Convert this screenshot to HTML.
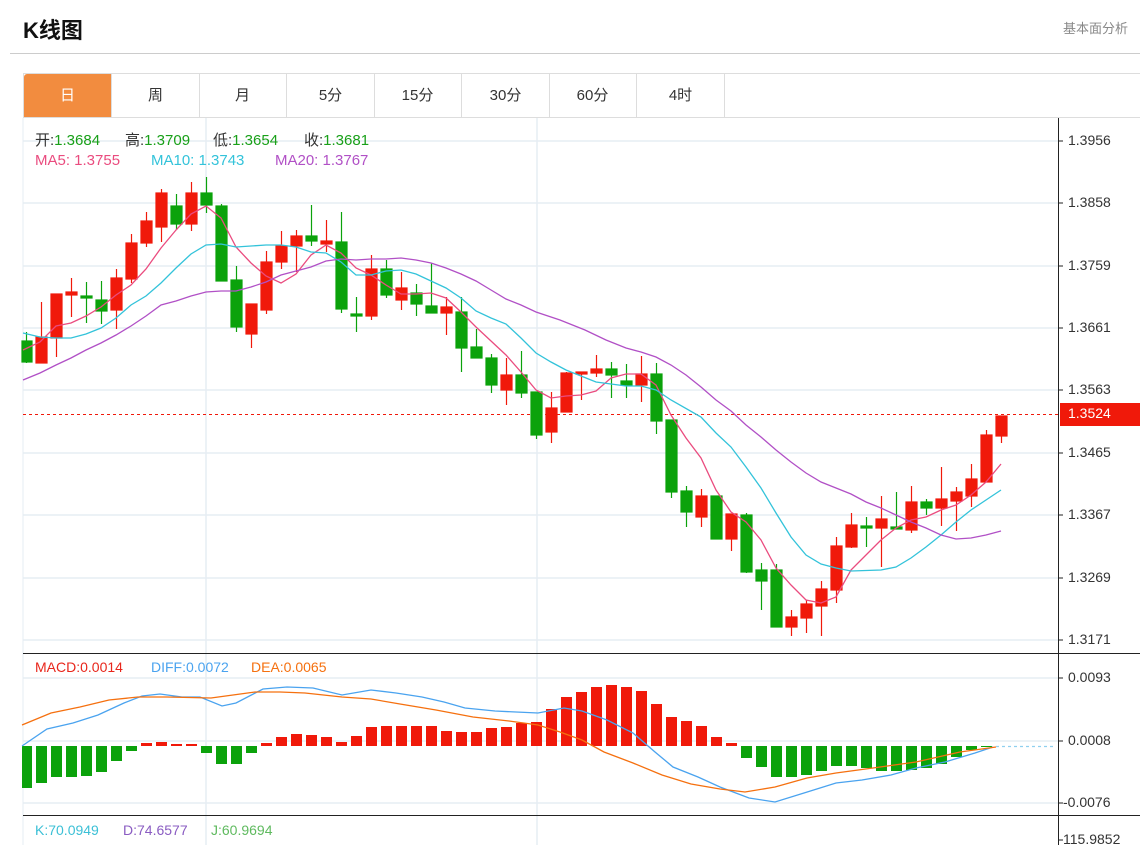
<!DOCTYPE html>
<html><head><meta charset="utf-8"><style>
*{margin:0;padding:0;box-sizing:border-box}
body{width:1140px;height:845px;overflow:hidden;background:#fff;font-family:"Liberation Sans","Noto Sans CJK SC",sans-serif;position:relative;color:#333}
.t{position:absolute;white-space:nowrap}
.tabs{position:absolute;left:23px;top:73px;width:1117px;height:45px;border-top:1px solid #ddd;border-bottom:1px solid #ddd;border-left:1px solid #ddd}
.tab{position:absolute;top:0;height:43px;width:88px;border-right:1px solid #ddd;text-align:center;line-height:43px;font-size:15px;color:#333}
.ax{position:absolute;left:1068px;font-size:14px;color:#333}
.g{color:#19a019}
</style></head><body>
<div class="t" style="left:23px;top:13px;font-size:22px;font-weight:bold;color:#111">K线图</div>
<div class="t" style="left:1063px;top:18px;font-size:13px;color:#888">基本面分析</div>
<div style="position:absolute;left:10px;top:53px;width:1130px;height:1px;background:#ccc"></div>
<div class="tabs">
<div class="tab" style="left:0;background:#f28c3f;color:#fff;border-radius:3px 0 0 0">日</div>
<div class="tab" style="left:88px">周</div>
<div class="tab" style="left:175px">月</div>
<div class="tab" style="left:263px">5分</div>
<div class="tab" style="left:350px">15分</div>
<div class="tab" style="left:438px">30分</div>
<div class="tab" style="left:525px">60分</div>
<div class="tab" style="left:613px">4时</div>
</div>
<svg style="position:absolute;left:0;top:0" width="1140" height="845">
<g stroke="#e6edf3" stroke-width="1.5">
<line x1="23" y1="141" x2="1058" y2="141"/><line x1="23" y1="203" x2="1058" y2="203"/><line x1="23" y1="266" x2="1058" y2="266"/><line x1="23" y1="328" x2="1058" y2="328"/><line x1="23" y1="390" x2="1058" y2="390"/><line x1="23" y1="453" x2="1058" y2="453"/><line x1="23" y1="515" x2="1058" y2="515"/><line x1="23" y1="578" x2="1058" y2="578"/><line x1="23" y1="640" x2="1058" y2="640"/>
<line x1="23" y1="678" x2="1058" y2="678"/><line x1="23" y1="741" x2="1058" y2="741"/><line x1="23" y1="803" x2="1058" y2="803"/>
<line x1="206" y1="118" x2="206" y2="845"/><line x1="537" y1="118" x2="537" y2="845"/>
</g>
<line x1="23" y1="118" x2="23" y2="845" stroke="#e6edf3"/>
<line x1="1058.5" y1="118" x2="1058.5" y2="845" stroke="#222"/>
<line x1="23" y1="653.5" x2="1140" y2="653.5" stroke="#222"/>
<line x1="23" y1="815.5" x2="1140" y2="815.5" stroke="#222"/>
<g stroke="#222"><line x1="1058" y1="141" x2="1063" y2="141"/><line x1="1058" y1="203" x2="1063" y2="203"/><line x1="1058" y1="266" x2="1063" y2="266"/><line x1="1058" y1="328" x2="1063" y2="328"/><line x1="1058" y1="390" x2="1063" y2="390"/><line x1="1058" y1="453" x2="1063" y2="453"/><line x1="1058" y1="515" x2="1063" y2="515"/><line x1="1058" y1="578" x2="1063" y2="578"/><line x1="1058" y1="640" x2="1063" y2="640"/><line x1="1058" y1="678" x2="1063" y2="678"/><line x1="1058" y1="741" x2="1063" y2="741"/><line x1="1058" y1="803" x2="1063" y2="803"/><line x1="1058" y1="840" x2="1063" y2="840"/></g>
<line x1="23" y1="414.5" x2="1058" y2="414.5" stroke="#f0190a" stroke-dasharray="3,3"/>
<rect x="1060" y="403" width="80" height="23" fill="#f0190a"/>
<g stroke-width="1.2">
<g fill="#0ba20b" stroke="#0ba20b">
<line x1="26.5" y1="332" x2="26.5" y2="363"/><rect x="22" y="341" width="10" height="21"/>
<line x1="86.5" y1="282" x2="86.5" y2="323"/><rect x="81" y="296" width="11" height="2"/>
<line x1="101.5" y1="281" x2="101.5" y2="324"/><rect x="96" y="300" width="11" height="11"/>
<line x1="176.5" y1="194" x2="176.5" y2="230"/><rect x="171" y="206" width="11" height="18"/>
<line x1="206.5" y1="177" x2="206.5" y2="213"/><rect x="201" y="193" width="11" height="12"/>
<line x1="221.5" y1="204" x2="221.5" y2="281"/><rect x="216" y="206" width="11" height="75"/>
<line x1="236.5" y1="266" x2="236.5" y2="332"/><rect x="231" y="280" width="11" height="47"/>
<line x1="311.5" y1="205" x2="311.5" y2="246"/><rect x="306" y="236" width="11" height="5"/>
<line x1="341.5" y1="212" x2="341.5" y2="313"/><rect x="336" y="242" width="11" height="67"/>
<line x1="356.5" y1="297" x2="356.5" y2="332"/><rect x="351" y="314" width="11" height="2"/>
<line x1="386.5" y1="260" x2="386.5" y2="298"/><rect x="381" y="269" width="11" height="26"/>
<line x1="416.5" y1="284" x2="416.5" y2="316"/><rect x="411" y="293" width="11" height="11"/>
<line x1="431.5" y1="263" x2="431.5" y2="313"/><rect x="426" y="306" width="11" height="7"/>
<line x1="461.5" y1="297" x2="461.5" y2="372"/><rect x="456" y="312" width="11" height="36"/>
<line x1="476.5" y1="329" x2="476.5" y2="358"/><rect x="471" y="347" width="11" height="11"/>
<line x1="491.5" y1="354" x2="491.5" y2="393"/><rect x="486" y="358" width="11" height="27"/>
<line x1="521.5" y1="351" x2="521.5" y2="398"/><rect x="516" y="375" width="11" height="18"/>
<line x1="536.5" y1="392" x2="536.5" y2="439"/><rect x="531" y="392" width="11" height="43"/>
<line x1="611.5" y1="362" x2="611.5" y2="398"/><rect x="606" y="369" width="11" height="6"/>
<line x1="626.5" y1="364" x2="626.5" y2="398"/><rect x="621" y="381" width="11" height="4"/>
<line x1="656.5" y1="363" x2="656.5" y2="434"/><rect x="651" y="374" width="11" height="47"/>
<line x1="671.5" y1="420" x2="671.5" y2="498"/><rect x="666" y="420" width="11" height="72"/>
<line x1="686.5" y1="486" x2="686.5" y2="527"/><rect x="681" y="491" width="11" height="21"/>
<line x1="716.5" y1="496" x2="716.5" y2="539"/><rect x="711" y="496" width="11" height="43"/>
<line x1="746.5" y1="513" x2="746.5" y2="573"/><rect x="741" y="515" width="11" height="57"/>
<line x1="761.5" y1="563" x2="761.5" y2="610"/><rect x="756" y="570" width="11" height="11"/>
<line x1="776.5" y1="564" x2="776.5" y2="627"/><rect x="771" y="570" width="11" height="57"/>
<line x1="866.5" y1="517" x2="866.5" y2="547"/><rect x="861" y="526" width="11" height="2"/>
<line x1="896.5" y1="492" x2="896.5" y2="529"/><rect x="891" y="527" width="11" height="2"/>
<line x1="926.5" y1="499" x2="926.5" y2="515"/><rect x="921" y="502" width="11" height="6"/>
</g>
<g fill="#f0190a" stroke="#f0190a">
<line x1="41.5" y1="302" x2="41.5" y2="363"/><rect x="36" y="337" width="11" height="26"/>
<line x1="56.5" y1="294" x2="56.5" y2="357"/><rect x="51" y="294" width="11" height="44"/>
<line x1="71.5" y1="278" x2="71.5" y2="317"/><rect x="66" y="292" width="11" height="3"/>
<line x1="116.5" y1="269" x2="116.5" y2="329"/><rect x="111" y="278" width="11" height="32"/>
<line x1="131.5" y1="234" x2="131.5" y2="283"/><rect x="126" y="243" width="11" height="36"/>
<line x1="146.5" y1="212" x2="146.5" y2="247"/><rect x="141" y="221" width="11" height="22"/>
<line x1="161.5" y1="189" x2="161.5" y2="242"/><rect x="156" y="193" width="11" height="34"/>
<line x1="191.5" y1="182" x2="191.5" y2="231"/><rect x="186" y="193" width="11" height="31"/>
<line x1="251.5" y1="304" x2="251.5" y2="348"/><rect x="246" y="304" width="11" height="30"/>
<line x1="266.5" y1="251" x2="266.5" y2="314"/><rect x="261" y="262" width="11" height="48"/>
<line x1="281.5" y1="231" x2="281.5" y2="269"/><rect x="276" y="246" width="11" height="16"/>
<line x1="296.5" y1="230" x2="296.5" y2="272"/><rect x="291" y="236" width="11" height="10"/>
<line x1="326.5" y1="220" x2="326.5" y2="252"/><rect x="321" y="241" width="11" height="3"/>
<line x1="371.5" y1="255" x2="371.5" y2="320"/><rect x="366" y="269" width="11" height="47"/>
<line x1="401.5" y1="272" x2="401.5" y2="310"/><rect x="396" y="288" width="11" height="12"/>
<line x1="446.5" y1="297" x2="446.5" y2="335"/><rect x="441" y="307" width="11" height="6"/>
<line x1="506.5" y1="358" x2="506.5" y2="405"/><rect x="501" y="375" width="11" height="15"/>
<line x1="551.5" y1="392" x2="551.5" y2="443"/><rect x="546" y="408" width="11" height="24"/>
<line x1="566.5" y1="372" x2="566.5" y2="412"/><rect x="561" y="373" width="11" height="39"/>
<line x1="581.5" y1="372" x2="581.5" y2="400"/><rect x="576" y="372" width="11" height="2"/>
<line x1="596.5" y1="355" x2="596.5" y2="377"/><rect x="591" y="369" width="11" height="4"/>
<line x1="641.5" y1="356" x2="641.5" y2="402"/><rect x="636" y="374" width="11" height="11"/>
<line x1="701.5" y1="489" x2="701.5" y2="527"/><rect x="696" y="496" width="11" height="21"/>
<line x1="731.5" y1="514" x2="731.5" y2="551"/><rect x="726" y="514" width="11" height="25"/>
<line x1="791.5" y1="610" x2="791.5" y2="636"/><rect x="786" y="617" width="11" height="10"/>
<line x1="806.5" y1="600" x2="806.5" y2="633"/><rect x="801" y="604" width="11" height="14"/>
<line x1="821.5" y1="581" x2="821.5" y2="636"/><rect x="816" y="589" width="11" height="17"/>
<line x1="836.5" y1="537" x2="836.5" y2="603"/><rect x="831" y="546" width="11" height="44"/>
<line x1="851.5" y1="513" x2="851.5" y2="548"/><rect x="846" y="525" width="11" height="22"/>
<line x1="881.5" y1="496" x2="881.5" y2="567"/><rect x="876" y="519" width="11" height="9"/>
<line x1="911.5" y1="486" x2="911.5" y2="533"/><rect x="906" y="502" width="11" height="28"/>
<line x1="941.5" y1="467" x2="941.5" y2="526"/><rect x="936" y="499" width="11" height="9"/>
<line x1="956.5" y1="487" x2="956.5" y2="531"/><rect x="951" y="492" width="11" height="9"/>
<line x1="971.5" y1="464" x2="971.5" y2="507"/><rect x="966" y="479" width="11" height="17"/>
<line x1="986.5" y1="430" x2="986.5" y2="482"/><rect x="981" y="435" width="11" height="47"/>
<line x1="1001.5" y1="416" x2="1001.5" y2="443"/><rect x="996" y="416" width="11" height="20"/>
</g>
</g>
<g fill="none" stroke-width="1.3">
<polyline stroke="#ea4c7f" points="23,350 40,342 56,326 71,323 86,316 101,307 116,295 131,285 146,269 161,248 176,230 191,214 206,206 221,218 236,247 251,263 266,276 281,283 296,274 311,255 326,245 341,253 356,268 371,275 386,285 401,294 416,294 431,293 446,298 461,312 476,327 491,341 506,355 521,372 536,390 551,398 566,396 581,395 596,391 611,378 626,374 641,374 656,385 671,415 686,438 701,458 716,490 731,512 746,522 761,540 776,568 791,585 806,600 821,603 836,597 851,570 866,555 881,540 896,528 911,520 926,517 941,510 956,505 971,495 986,482 1001,464"/>
<polyline stroke="#33c3da" points="23,333 40,337 56,338 71,338 86,334 101,328 116,318 131,305 146,296 161,283 176,268 191,254 206,245 221,244 236,247 251,246 266,245 281,245 296,247 311,252 326,253 341,262 356,275 371,275 386,271 401,270 416,274 431,281 446,288 461,298 476,311 491,318 506,324 521,338 536,353 551,362 566,370 596,382 626,386 641,386 656,390 671,400 701,417 716,433 731,447 746,467 761,488 776,513 791,537 806,555 821,564 836,568 851,571 881,570 896,567 911,558 926,547 941,535 956,522 971,510 986,500 1001,490"/>
<polyline stroke="#b150c6" points="23,380 40,373 56,365 71,358 86,350 101,343 116,335 131,326 146,316 161,305 176,301 191,296 206,292 221,291 236,291 251,287 266,282 281,275 296,271 311,267 326,261 341,259 356,260 371,259 386,259 401,258 416,260 431,263 446,268 461,274 476,281 491,290 506,299 521,305 536,312 560,320 585,330 606,340 626,348 641,352 656,357 671,365 686,375 701,387 716,400 731,411 746,425 761,437 776,450 791,462 806,473 821,482 836,488 851,494 866,502 881,508 896,515 911,522 926,528 941,535 956,539 971,538 986,535 1001,531"/>
</g>
<g fill="#0ba20b">
<rect x="22" y="746" width="10" height="42"/><rect x="36" y="746" width="11" height="37"/><rect x="51" y="746" width="11" height="31"/><rect x="66" y="746" width="11" height="31"/><rect x="81" y="746" width="11" height="30"/><rect x="96" y="746" width="11" height="26"/><rect x="111" y="746" width="11" height="15"/><rect x="126" y="746" width="11" height="5"/>
<rect x="201" y="746" width="11" height="7"/><rect x="216" y="746" width="11" height="18"/><rect x="231" y="746" width="11" height="18"/><rect x="246" y="746" width="11" height="7"/>
<rect x="741" y="746" width="11" height="12"/><rect x="756" y="746" width="11" height="21"/><rect x="771" y="746" width="11" height="31"/><rect x="786" y="746" width="11" height="31"/><rect x="801" y="746" width="11" height="29"/><rect x="816" y="746" width="11" height="25"/><rect x="831" y="746" width="11" height="20"/><rect x="846" y="746" width="11" height="20"/><rect x="861" y="746" width="11" height="22"/><rect x="876" y="746" width="11" height="25"/><rect x="891" y="746" width="11" height="25"/><rect x="906" y="746" width="11" height="24"/><rect x="921" y="746" width="11" height="22"/><rect x="936" y="746" width="11" height="18"/><rect x="951" y="746" width="11" height="11"/><rect x="966" y="746" width="11" height="4"/><rect x="981" y="746" width="11" height="1"/>
</g>
<g fill="#f0190a">
<rect x="141" y="743" width="11" height="3"/><rect x="156" y="742" width="11" height="4"/><rect x="171" y="744" width="11" height="2"/><rect x="186" y="744" width="11" height="2"/>
<rect x="261" y="743" width="11" height="3"/><rect x="276" y="737" width="11" height="9"/><rect x="291" y="734" width="11" height="12"/><rect x="306" y="735" width="11" height="11"/><rect x="321" y="737" width="11" height="9"/><rect x="336" y="742" width="11" height="4"/><rect x="351" y="736" width="11" height="10"/><rect x="366" y="727" width="11" height="19"/><rect x="381" y="726" width="11" height="20"/><rect x="396" y="726" width="11" height="20"/><rect x="411" y="726" width="11" height="20"/><rect x="426" y="726" width="11" height="20"/><rect x="441" y="731" width="11" height="15"/><rect x="456" y="732" width="11" height="14"/><rect x="471" y="732" width="11" height="14"/><rect x="486" y="728" width="11" height="18"/><rect x="501" y="727" width="11" height="19"/><rect x="516" y="723" width="11" height="23"/><rect x="531" y="722" width="11" height="24"/><rect x="546" y="709" width="11" height="37"/><rect x="561" y="697" width="11" height="49"/><rect x="576" y="692" width="11" height="54"/><rect x="591" y="687" width="11" height="59"/><rect x="606" y="685" width="11" height="61"/><rect x="621" y="687" width="11" height="59"/><rect x="636" y="691" width="11" height="55"/><rect x="651" y="704" width="11" height="42"/><rect x="666" y="717" width="11" height="29"/><rect x="681" y="721" width="11" height="25"/><rect x="696" y="726" width="11" height="20"/><rect x="711" y="737" width="11" height="9"/><rect x="726" y="743" width="11" height="3"/>
</g>
<g fill="none" stroke-width="1.3">
<polyline stroke="#4aa3ef" points="22,746 47,729 73,723 98,715 124,703 142,696 160,694 182,697 200,697 222,706 236,703 263,689 287,687 313,688 342,695 371,690 396,693 422,697 444,702 465,708 495,711 516,712 538,713 564,708 582,711 607,720 633,733 655,752 673,767 698,777 720,787 749,798 775,802 804,793 836,783 862,780 891,775 916,768 945,762 975,753 993,747"/>
<polyline stroke="#f5700f" points="22,725 51,713 80,707 109,700 138,697 167,697 211,698 233,695 255,692 280,692 305,693 342,697 371,699 400,704 436,710 473,717 509,721 538,725 560,732 582,740 604,752 633,763 662,775 691,784 720,789 745,792 775,787 807,778 836,773 873,768 916,762 960,752 996,747"/>
<line x1="996" y1="746.5" x2="1056" y2="746.5" stroke="#8fd0ef" stroke-dasharray="3,3"/>
</g>
</svg>
<div class="t" style="left:35px;top:129px;font-size:15px">开:<span class="g">1.3684</span></div>
<div class="t" style="left:125px;top:129px;font-size:15px">高:<span class="g">1.3709</span></div>
<div class="t" style="left:213px;top:129px;font-size:15px">低:<span class="g">1.3654</span></div>
<div class="t" style="left:304px;top:129px;font-size:15px">收:<span class="g">1.3681</span></div>
<div class="t" style="left:35px;top:152px;font-size:15px;color:#ea4c7f">MA5: 1.3755</div>
<div class="t" style="left:151px;top:152px;font-size:15px;color:#33c3da">MA10: 1.3743</div>
<div class="t" style="left:275px;top:152px;font-size:15px;color:#b150c6">MA20: 1.3767</div>
<div class="t" style="left:35px;top:659px;font-size:14px;color:#e8261b">MACD:0.0014</div>
<div class="t" style="left:151px;top:659px;font-size:14px;color:#4aa3ef">DIFF:0.0072</div>
<div class="t" style="left:251px;top:659px;font-size:14px;color:#f5700f">DEA:0.0065</div>
<div class="t" style="left:35px;top:822px;font-size:14px;color:#3cc0d6">K:70.0949</div>
<div class="t" style="left:123px;top:822px;font-size:14px;color:#8a5cc2">D:74.6577</div>
<div class="t" style="left:211px;top:822px;font-size:14px;color:#5fba5f">J:60.9694</div>
<div class="ax" style="top:132px">1.3956</div>
<div class="ax" style="top:194px">1.3858</div>
<div class="ax" style="top:257px">1.3759</div>
<div class="ax" style="top:319px">1.3661</div>
<div class="ax" style="top:381px">1.3563</div>
<div class="ax" style="top:405px;color:#fff">1.3524</div>
<div class="ax" style="top:444px">1.3465</div>
<div class="ax" style="top:506px">1.3367</div>
<div class="ax" style="top:569px">1.3269</div>
<div class="ax" style="top:631px">1.3171</div>
<div class="ax" style="top:669px">0.0093</div>
<div class="ax" style="top:732px">0.0008</div>
<div class="ax" style="top:794px;left:1063px">-0.0076</div>
<div class="ax" style="top:831px;left:1063px">115.9852</div>
</body></html>
